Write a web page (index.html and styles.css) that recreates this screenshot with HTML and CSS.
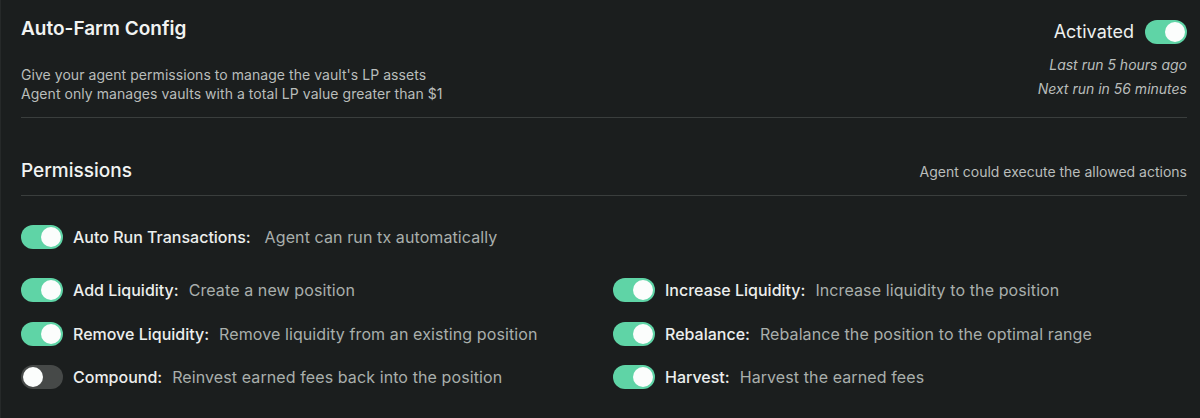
FILE: index.html
```html
<!DOCTYPE html>
<html>
<head>
<meta charset="utf-8">
<link rel="stylesheet" href="styles.css">
</head>
<body>
<div class="card">
  <div class="header">
    <div class="intro">
      <h1 class="title">Auto-Farm Config</h1>
      <p class="desc">Give your agent permissions to manage the vault's LP assets<br>Agent only manages vaults with a total LP value greater than $1</p>
    </div>
    <div class="status">
      <div class="status-row">
        <span class="status-label">Activated</span>
        <span class="toggle on"><span class="knob"></span></span>
      </div>
      <div class="runs">
        <div>Last run 5 hours ago</div>
        <div>Next run in 56 minutes</div>
      </div>
    </div>
  </div>
  <div class="perm-head">
    <h2 class="perm-title">Permissions</h2>
    <span class="perm-note">Agent could execute the allowed actions</span>
  </div>
  <div class="perm-list">
    <div class="perm first">
      <span class="toggle on"><span class="knob"></span></span>
      <span class="perm-label wide">Auto Run Transactions:</span>
      <span class="perm-desc">Agent can run tx automatically</span>
    </div>
    <div class="perm-grid">
      <div class="perm">
        <span class="toggle on"><span class="knob"></span></span>
        <span class="perm-label">Add Liquidity:</span>
        <span class="perm-desc">Create a new position</span>
      </div>
      <div class="perm">
        <span class="toggle on"><span class="knob"></span></span>
        <span class="perm-label">Increase Liquidity:</span>
        <span class="perm-desc">Increase liquidity to the position</span>
      </div>
      <div class="perm">
        <span class="toggle on"><span class="knob"></span></span>
        <span class="perm-label">Remove Liquidity:</span>
        <span class="perm-desc">Remove liquidity from an existing position</span>
      </div>
      <div class="perm">
        <span class="toggle on"><span class="knob"></span></span>
        <span class="perm-label">Rebalance:</span>
        <span class="perm-desc">Rebalance the position to the optimal range</span>
      </div>
      <div class="perm">
        <span class="toggle off"><span class="knob"></span></span>
        <span class="perm-label">Compound:</span>
        <span class="perm-desc">Reinvest earned fees back into the position</span>
      </div>
      <div class="perm">
        <span class="toggle on"><span class="knob"></span></span>
        <span class="perm-label">Harvest:</span>
        <span class="perm-desc">Harvest the earned fees</span>
      </div>
    </div>
  </div>
</div>
</body>
</html>
```
FILE: styles.css
```css
* { box-sizing: border-box; }
html, body {
  margin: 0;
  padding: 0;
  background: #1b1e1e;
  height: 100%;
}
body {
  font-family: Inter, "Noto Sans", sans-serif;
  color: #ecefed;
}
.card {
  padding: 17px 13px 0 20px;
  height: 418px;
  border-left: 1px solid #262929;
}
.header {
  display: flex;
  justify-content: space-between;
  align-items: flex-start;
  border-bottom: 1px solid #3a3e3d;
  padding-bottom: 14px;
}
.title {
  margin: 0;
  font-size: 19px;
  font-weight: 600;
  line-height: 24px;
  color: #f1f3f2;
}
.desc {
  margin: 24px 0 0;
  font-size: 14px;
  line-height: 19px;
  color: #b9bdbb;
  letter-spacing: 0.05px;
}
.status {
  display: flex;
  flex-direction: column;
  align-items: flex-end;
  padding-top: 3px;
}
.status-row {
  display: flex;
  align-items: center;
  gap: 11px;
}
.status-label {
  font-size: 18px;
  line-height: 24px;
  color: #eef0ef;
}
.runs {
  margin-top: 9px;
  font-size: 14px;
  font-style: italic;
  line-height: 24px;
  text-align: right;
  color: #b9bdbb;
}
.toggle {
  flex: none;
  width: 42px;
  height: 24px;
  border-radius: 12px;
  display: flex;
  align-items: center;
  padding: 0 2px;
}
.toggle.on {
  background: #5fd4a6;
  justify-content: flex-end;
}
.toggle.off {
  background: #464948;
  justify-content: flex-start;
}
.knob {
  width: 20px;
  height: 20px;
  border-radius: 50%;
  background: #fbfdfc;
}
.perm-head {
  display: flex;
  justify-content: space-between;
  align-items: center;
  margin-top: 41px;
  padding-bottom: 12px;
  border-bottom: 1px solid #3a3e3d;
}
.perm-title {
  margin: 0;
  font-size: 19px;
  font-weight: 500;
  line-height: 24px;
  color: #f1f3f2;
}
.perm-note {
  font-size: 14px;
  color: #b9bdbb;
}
.perm-list {
  padding-top: 29px;
}
.perm {
  display: flex;
  align-items: center;
  height: 24px;
}
.perm.first {
  margin-bottom: 29px;
}
.perm-grid {
  display: grid;
  grid-template-columns: 1fr 1fr;
  column-gap: 18px;
  row-gap: 19.5px;
}
.toggle + .perm-label { margin-left: 10px; }
.perm-label {
  font-size: 16px;
  font-weight: 500;
  color: #eceeed;
  margin-right: 10px;
}
.perm-label.wide { margin-right: 14px; }
.perm-desc {
  font-size: 16px;
  color: #a9afac;
  letter-spacing: 0.1px;
}
```
